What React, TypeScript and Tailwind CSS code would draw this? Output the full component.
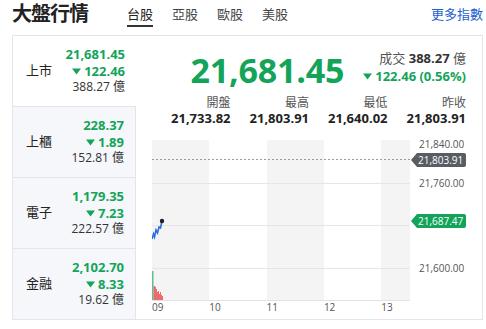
import React from "react";

type Market = {
  name: string;
  price: string;
  change: string;
  volume: string;
  active?: boolean;
};

const markets: Market[] = [
  { name: "上市", price: "21,681.45", change: "122.46", volume: "388.27", active: true },
  { name: "上櫃", price: "228.37", change: "1.89", volume: "152.81" },
  { name: "電子", price: "1,179.35", change: "7.23", volume: "222.57" },
  { name: "金融", price: "2,102.70", change: "8.33", volume: "19.62" },
];

const stats = [
  { label: "開盤", value: "21,733.82" },
  { label: "最高", value: "21,803.91" },
  { label: "最低", value: "21,640.02" },
  { label: "昨收", value: "21,803.91" },
];

const tabs = ["台股", "亞股", "歐股", "美股"];

function DownArrow({ className = "" }: { className?: string }) {
  return (
    <svg width="9" height="7" viewBox="0 0 9 7" className={className}>
      <path d="M0 0.5 H9 L4.5 6.5 Z" fill="#13a45a" />
    </svg>
  );
}

function Badge({ text, color, top }: { text: string; color: string; top: number }) {
  return (
    <div className="absolute left-[1px] flex items-center" style={{ top: top - 7 }}>
      <svg width="6" height="14" viewBox="0 0 6 14">
        <path d="M6 0 V14 L0 7 Z" fill={color} />
      </svg>
      <div
        className="h-[14px] pl-[1px] pr-[3px] rounded-r-[2px] text-[10px] leading-[14px] text-white whitespace-nowrap"
        style={{ background: color }}
      >
        {text}
      </div>
    </div>
  );
}

function Chart() {
  const axis = [
    { v: "21,840.00", y: 4 },
    { v: "21,760.00", y: 43 },
    { v: "21,600.00", y: 128 },
  ];
  return (
    <div className="flex flex-col">
      <div className="flex">
        <svg width="258" height="161" viewBox="0 0 258 161" className="shrink-0">
          <rect x="0" y="0" width="57" height="160" fill="#f4f4f4" />
          <rect x="115" y="0" width="57" height="160" fill="#f4f4f4" />
          <rect x="229" y="0" width="29" height="160" fill="#f4f4f4" />
          <line x1="0" y1="43.5" x2="258" y2="43.5" stroke="#e6e6e6" />
          <line x1="0" y1="85.5" x2="258" y2="85.5" stroke="#e6e6e6" />
          <line x1="0" y1="128.5" x2="258" y2="128.5" stroke="#e6e6e6" />
          <line x1="0" y1="160.5" x2="258" y2="160.5" stroke="#e2e2e2" />
          <line x1="0" y1="19.5" x2="258" y2="19.5" stroke="#9a9a9a" strokeDasharray="2 2" />
          <rect x="0" y="131" width="1.5" height="29" fill="#5cc28d" />
          <path
            d="M1.5 160 V146 H3 V147 H4 V149 H5 V152 H6 V151 H7 V154 H8 V152 H9 V155 H10 V156 H11 V160 Z"
            fill="#ec6b6b"
          />
          <polyline
            points="0,99 1.5,94 2.5,97 4,90 5.5,93 7,87 8.5,88 10,81"
            fill="none"
            stroke="#2a6fdf"
            strokeWidth="1.6"
          />
          <circle cx="10" cy="81" r="2.2" fill="#222" />
        </svg>
        <div className="relative w-[56px] shrink-0 h-[161px] text-[10px] text-[#555]">
          {axis.map((a) => (
            <div key={a.v} className="absolute left-[9px] leading-[12px]" style={{ top: a.y - 6 }}>
              {a.v}
            </div>
          ))}
          <Badge text="21,803.91" color="#585d63" top={19.5} />
          <Badge text="21,687.47" color="#13a45a" top={80.5} />
        </div>
      </div>
      <div className="flex text-[10px] text-[#555] leading-[12px]">
        {["09", "10", "11", "12", "13"].map((h) => (
          <div key={h} className="w-[57.3px]">
            {h}
          </div>
        ))}
      </div>
    </div>
  );
}

export default function App() {
  return (
    <div
      className="w-[486px] h-[329px] bg-white text-[#222] overflow-hidden"
      style={{ fontFamily: '"Open Sans", "Noto Sans CJK TC", sans-serif' }}
    >
      <div className="h-[35px] flex items-start pl-[12px] pr-[3px]">
        <h1 className="text-[20px] font-bold leading-[28px] tracking-[-1px]">大盤行情</h1>
        <div className="flex gap-[19px] ml-[39px] mt-[5px]">
          {tabs.map((t, i) => (
            <div
              key={t}
              className={
                i === 0
                  ? "text-[13px] leading-[18px] pb-[2px] border-b-[2px] border-[#333] text-[#222]"
                  : "text-[13px] leading-[18px] pb-[2px] text-[#444]"
              }
            >
              {t}
            </div>
          ))}
        </div>
        <a className="ml-auto mt-[5px] text-[13px] leading-[18px] text-[#1e62d0]">更多指數</a>
      </div>

      <div className="ml-[12px] w-[471px] h-[285px] border border-[#e3e5e8] flex">
        <div className="w-[123px] shrink-0 flex flex-col">
          {markets.map((m, i) => (
            <div
              key={m.name}
              className={
                (m.active ? "bg-white" : "bg-[#f5f7fa] border-r border-[#e3e5e8]") +
                (i < markets.length - 1 ? " border-b border-[#e3e5e8]" : "") +
                " flex-1 flex items-center justify-between pl-[13px] pr-[11px]"
              }
            >
              <span className="text-[13px] whitespace-nowrap">{m.name}</span>
              <div className="flex flex-col items-end leading-[16.5px] whitespace-nowrap">
                <span className="text-[13px] font-bold text-[#13a45a]">{m.price}</span>
                <span className="flex items-center gap-[3px] text-[13px] font-bold text-[#13a45a]">
                  <DownArrow />
                  {m.change}
                </span>
                <span className="text-[12px] text-[#333]">{m.volume} 億</span>
              </div>
            </div>
          ))}
        </div>

        <div className="flex-1 min-w-0 flex flex-col pl-[16px] pr-[16px]">
          <div className="flex items-center justify-end gap-[19px] h-[58px] mt-[2px]">
            <div className="text-[34px] font-bold text-[#13a45a] leading-[40px] tracking-[-0.2px] mt-[6px]">21,681.45</div>
            <div className="flex flex-col items-end leading-[18px] whitespace-nowrap">
              <div className="text-[13px] text-[#555]">
                成交 <span className="font-bold text-[#333]">388.27</span> 億
              </div>
              <div className="flex items-center gap-[3px] text-[13px] font-bold text-[#13a45a]">
                <DownArrow />
                122.46 (0.56%)
              </div>
            </div>
          </div>
          <div className="grid grid-cols-4 text-right mt-[1px]">
            {stats.map((s) => (
              <div key={s.label} className="flex flex-col items-end gap-[2px]">
                <span className="text-[12px] text-[#555] leading-[12px]">{s.label}</span>
                <span className="text-[13px] font-bold leading-[14px]">{s.value}</span>
              </div>
            ))}
          </div>
          <div className="mt-[15px]">
            <Chart />
          </div>
        </div>
      </div>
    </div>
  );
}
